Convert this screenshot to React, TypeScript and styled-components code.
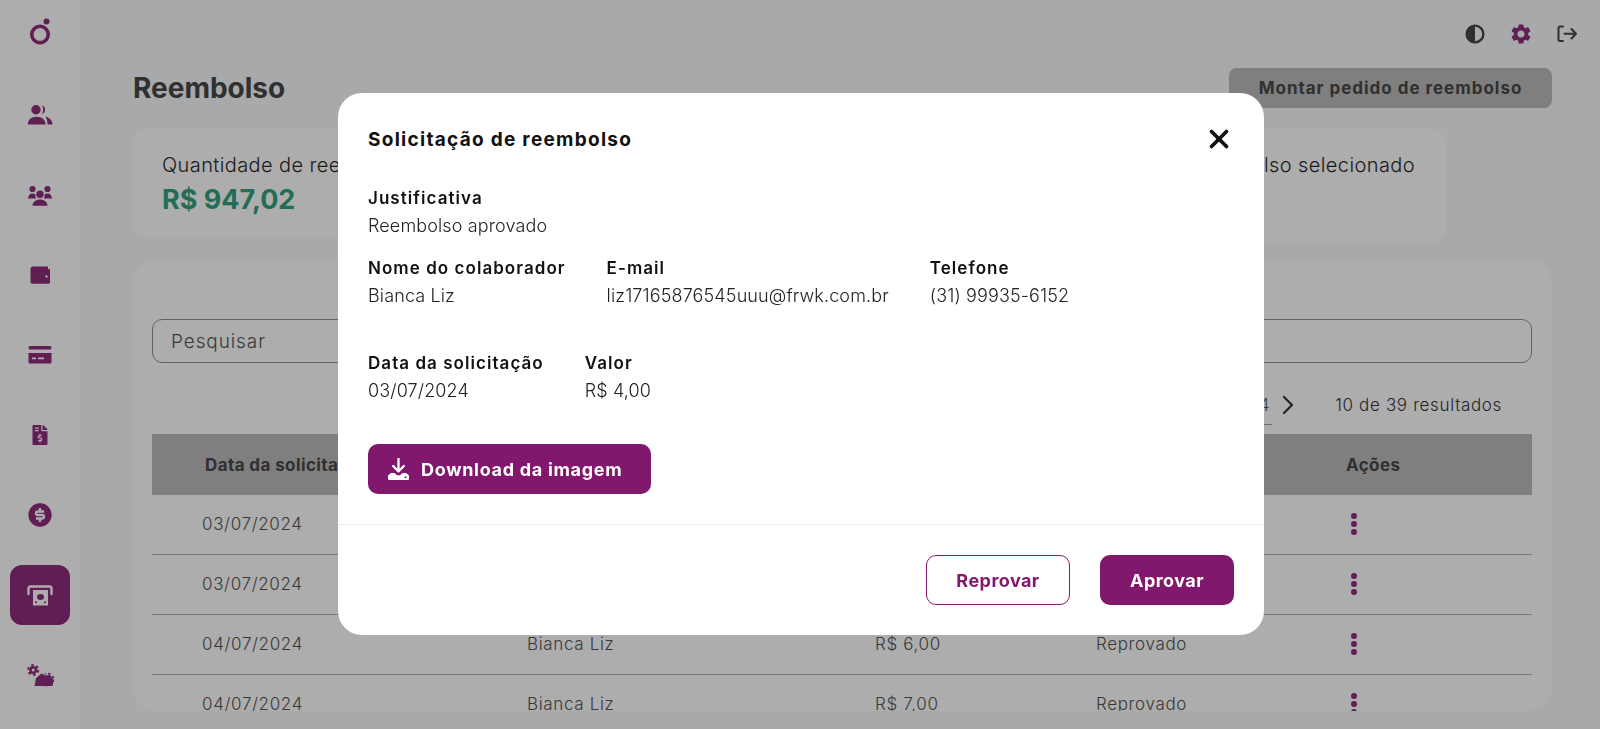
import React from 'react'
import styled, { createGlobalStyle } from 'styled-components'
import { X, ChevronRight } from 'lucide-react'
import { FaFileInvoiceDollar } from 'react-icons/fa'
import { MdSettings } from 'react-icons/md'
import { RiMoneyDollarCircleFill } from 'react-icons/ri'

const GlobalStyle = createGlobalStyle`
  html, body {
    margin: 0;
    height: 100%;
    overflow: hidden;
    background: #f7f8fc;
    font-family: Inter, "Liberation Sans", sans-serif;
  }
  * { box-sizing: border-box; }
`

const purple = '#82186e'

const Shell = styled.div`
  display: flex;
  width: 1600px;
  height: 729px;
  overflow: hidden;
`

const Sidebar = styled.nav`
  width: 80px;
  flex: none;
  background: #fff;
  display: flex;
  flex-direction: column;
  align-items: center;
  padding-top: 17px;
`

const Logo = styled.svg`
  width: 22px;
  height: 28px;
  margin-bottom: 40px;
`

const NavItem = styled.div<{ $active?: boolean }>`
  width: 60px;
  height: 60px;
  flex: none;
  margin-bottom: 20px;
  border-radius: 12px;
  display: flex;
  align-items: center;
  justify-content: center;
  color: ${p => (p.$active ? '#fff' : purple)};
  background: ${p => (p.$active ? purple : 'transparent')};
`

const Main = styled.main`
  flex: 1;
  min-width: 0;
  display: flex;
  flex-direction: column;
  padding: 0 48px 18px 52px;
`

const TopBar = styled.div`
  height: 68px;
  flex: none;
  margin-right: -25px;
  display: flex;
  align-items: center;
  justify-content: flex-end;
  gap: 24px;
  color: #343434;
`

const TitleRow = styled.div`
  height: 40px;
  flex: none;
  display: flex;
  align-items: center;
  justify-content: space-between;
`

const Title = styled.h1`
  margin: 0 0 0 1px;
  font-size: 28px;
  font-weight: 700;
  color: #343434;
`

const GreyButton = styled.button`
  width: 323px;
  height: 40px;
  border: 0;
  border-radius: 8px;
  background: #b4b4b4;
  color: #343434;
  font-family: Inter, sans-serif;
  font-size: 17px;
  font-weight: 700;
  letter-spacing: 0.98px;
`

const Summary = styled.section`
  width: 1314px;
  height: 115px;
  flex: none;
  margin-top: 20px;
  display: flex;
  align-items: flex-start;
  gap: 16px;
`

const SummaryCard = styled.div<{ $h: number; $grow?: boolean; $end?: boolean }>`
  height: ${p => p.$h}px;
  flex: ${p => (p.$grow ? 1 : 'none')};
  width: ${p => (p.$grow ? 'auto' : '500px')};
  padding: 25px 31px 0 30px;
  border-radius: 16px;
  background: #fff;
  display: flex;
  flex-direction: column;
  align-items: ${p => (p.$end ? 'flex-end' : 'flex-start')};
`

const SummaryLabel = styled.div`
  font-size: 20px;
  font-weight: 300;
  line-height: 24px;
  letter-spacing: 0.4px;
  color: #111;
`

const SummaryValue = styled.div`
  margin-top: 8px;
  font-size: 27px;
  font-weight: 700;
  line-height: 30px;
  color: #1c9972;
`

const TableCard = styled.section`
  flex: 1;
  min-height: 0;
  margin-top: 16px;
  padding: 60px 20px 0;
  border-radius: 24px;
  background: #fff;
  overflow: hidden;
`

const Search = styled.div`
  height: 44px;
  padding-left: 18px;
  border: 1px solid #888;
  border-radius: 10px;
  display: flex;
  align-items: center;
  font-size: 19px;
  font-weight: 300;
  letter-spacing: 0.9px;
  color: #444;
`

const Pager = styled.div`
  height: 71px;
  padding: 12px 30px 0 0;
  display: flex;
  align-items: center;
  justify-content: flex-end;
  font-size: 17px;
  font-weight: 300;
  letter-spacing: 0.65px;
  color: #222;
`

const Results = styled.span`
  margin-left: 31px;
`

const PageNum = styled.span`
  line-height: 20px;
  padding: 0 2px 9px 0;
  margin-top: 10px;
  border-bottom: 1px solid #999;
  color: #444;
`

const Table = styled.div`
  display: flex;
  flex-direction: column;
`

const columns = '326px 347px 221px 250px 1fr'

const HeadRow = styled.div`
  height: 61px;
  flex: none;
  display: grid;
  grid-template-columns: ${columns};
  align-items: center;
  background: #b4b4b4;
  font-size: 17px;
  font-weight: 700;
  letter-spacing: 0.4px;
  color: #343434;
`

const HeadCell = styled.div<{ $pad: number }>`
  padding-left: ${p => p.$pad}px;
`

const Row = styled.div`
  height: 60px;
  flex: none;
  padding-bottom: 1px;
  display: grid;
  grid-template-columns: ${columns};
  align-items: center;
  border-bottom: 1px solid #aaa;
  font-size: 17px;
  font-weight: 300;
  letter-spacing: 0.65px;
  color: #444;
`

const Cell = styled.div<{ $pad?: number }>`
  padding-left: ${p => p.$pad ?? 50}px;
`

const Dots = styled.div`
  padding-left: 55px;
  display: flex;
  flex-direction: column;
  gap: 2px;
`

const Dot = styled.span`
  width: 6px;
  height: 6px;
  border-radius: 50%;
  background: ${purple};
`

const Overlay = styled.div`
  position: fixed;
  inset: 0;
  background: rgba(41, 41, 41, 0.384);
  display: flex;
  align-items: center;
  justify-content: center;
`

const Modal = styled.div`
  width: 926px;
  height: 542px;
  margin: 0 0 1px 2px;
  border-radius: 24px;
  background: #fff;
  display: flex;
  flex-direction: column;
`

const ModalHead = styled.div`
  height: 92px;
  flex: none;
  padding: 0 30px;
  display: flex;
  align-items: center;
  justify-content: space-between;
`

const ModalTitle = styled.h2`
  margin: 0;
  font-size: 19px;
  font-weight: 700;
  letter-spacing: 1.28px;
  color: #111;
`

const ModalBody = styled.div`
  flex: 1;
  padding: 1px 30px 0;
`

const FieldRow = styled.div<{ $height: number }>`
  display: flex;
  gap: 41px;
  height: ${p => p.$height}px;
`

const Label = styled.div`
  height: 28px;
  font-size: 17px;
  font-weight: 600;
  line-height: 24px;
  letter-spacing: 1.05px;
  color: #111;
`

const Value = styled.div`
  font-size: 18px;
  font-weight: 300;
  line-height: 24px;
  letter-spacing: 0.13px;
  color: #222;
`

const PrimaryButton = styled.button<{ $w: number }>`
  width: ${p => p.$w}px;
  height: 50px;
  border: 0;
  border-radius: 10px;
  background: ${purple};
  color: #fff;
  font-family: Inter, sans-serif;
  font-size: 18px;
  font-weight: 700;
  letter-spacing: 0.45px;
  display: flex;
  align-items: center;
  justify-content: center;
  gap: 11px;
`

const OutlineButton = styled(PrimaryButton)`
  background: #fff;
  border: 1px solid ${purple};
  color: ${purple};
`

const DownloadButton = styled(PrimaryButton)`
  justify-content: flex-start;
  padding-left: 20px;
  letter-spacing: 0.7px;
`

const ModalFoot = styled.div`
  height: 111px;
  flex: none;
  padding-right: 30px;
  border-top: 1px solid #eee;
  display: flex;
  align-items: center;
  justify-content: flex-end;
  gap: 30px;
`

const CloseBtn = styled.button`
  border: 0;
  padding: 0;
  background: none;
  color: #111;
  display: flex;
`

const TwoPeopleIcon = () => (
  <svg width="26" height="20" viewBox="0 0 26 20" fill="currentColor">
    <circle cx="9" cy="4.7" r="4.7" />
    <path d="M15 .6A4.4 4.4 0 0 1 15 9C16.6 6.4 16.6 3.2 15 .6Z" />
    <path d="M.8 19.6C.8 14.5 4.8 11.8 9.5 11.8C14.2 11.8 18.6 14.5 18.6 19.6Z" />
    <path d="M18.5 11.8C22.5 12.4 25.5 15.5 25.5 19.6H20.5C20.5 16.5 19.8 14 18.5 11.8Z" />
  </svg>
)

const GroupIcon = () => (
  <svg width="26" height="21" viewBox="0 0 26 21" fill="currentColor">
    <circle cx="5.5" cy="4" r="3.1" />
    <circle cx="20.5" cy="4" r="3.1" />
    <circle cx="13" cy="9.3" r="3.7" />
    <path d="M1 13.5C1 10.5 3 8.5 5.5 8.5C6.8 8.5 7.8 8.9 8.5 9.5C8.3 11 8.5 12.3 9 13.5Z" />
    <path d="M25 13.5C25 10.5 23 8.5 20.5 8.5C19.2 8.5 18.2 8.9 17.5 9.5C17.7 11 17.5 12.3 17 13.5Z" />
    <path d="M5.5 20.8C5.5 16.8 9 14.5 13 14.5C17 14.5 20.5 16.8 20.5 20.8Z" />
  </svg>
)

const WalletIcon = () => (
  <svg width="20" height="18" viewBox="0 0 20 18" fill="currentColor">
    <path fillRule="evenodd" clipRule="evenodd" d="M.5 3C.5 1.5 1.5.5 3 .5H18V3H19C19.6 3 20 3.5 20 4V16C20 17 19.3 17.8 18.3 17.8H2.5C1.3 17.8.5 17 .5 15.8ZM16.5 9.3A1.2 1.2 0 1 0 16.5 11.7A1.2 1.2 0 1 0 16.5 9.3Z" />
  </svg>
)

const CardIcon = () => (
  <svg width="24" height="18" viewBox="0 0 24 18" fill="currentColor">
    <rect x=".5" y="0" width="23" height="3.6" rx="1.5" />
    <path fillRule="evenodd" clipRule="evenodd" d="M.5 7H23.5V16C23.5 17 23 17.5 22 17.5H2C1 17.5.5 17 .5 16ZM4 11.5V13.2H8V11.5ZM10 11.5V13.2H16V11.5Z" />
  </svg>
)

const AtmIcon = () => (
  <svg width="28" height="21" viewBox="0 0 28 21" fill="none">
    <path d="M2.5 9V3.5Q2.5 1.5 4.5 1.5H23.5Q25.5 1.5 25.5 3.5V9" stroke="currentColor" strokeWidth="2.4" strokeLinecap="round" />
    <path fillRule="evenodd" clipRule="evenodd" d="M7 5H22V20.5H7ZM14.5 9A3.5 3 0 1 0 14.5 15A3.5 3 0 1 0 14.5 9ZM10 16.2A1 1 0 1 0 10 18.2A1 1 0 1 0 10 16.2ZM19 16.2A1 1 0 1 0 19 18.2A1 1 0 1 0 19 16.2Z" fill="currentColor" />
  </svg>
)

const CogsIcon = () => (
  <svg width="27" height="24" viewBox="0 0 27 24" fill="currentColor">
    <circle cx="6.2" cy="7" r="4" />
    <circle cx="6.2" cy="7" r="5" fill="none" stroke="currentColor" strokeWidth="2" strokeDasharray="2.5 2.73" />
    <circle cx="6.2" cy="7" r="1.5" fill="#fff" />
    <path d="M7.5 23L9 15L14.5 10.5L18 12.5L23 12L26.5 17L25.5 23Z" />
    <circle cx="20.5" cy="16.5" r="6" fill="none" stroke="currentColor" strokeWidth="1.8" strokeDasharray="2.4 2.31" />
    <circle cx="10.2" cy="13" r="1.1" fill="#fff" />
    <circle cx="17.5" cy="11" r="1" fill="#fff" />
  </svg>
)

const ContrastIcon = () => (
  <svg width="20" height="20" viewBox="0 0 20 20" fill="none">
    <circle cx="10" cy="10" r="8.4" stroke="currentColor" strokeWidth="2.4" />
    <path d="M10 1.5A8.5 8.5 0 0 0 10 18.5Z" fill="currentColor" />
  </svg>
)

const LogoutIcon = () => (
  <svg width="20" height="18" viewBox="0 0 20 18" fill="none" stroke="currentColor" strokeWidth="2" strokeLinecap="round" strokeLinejoin="round">
    <path d="M6 1.5H3Q1.5 1.5 1.5 3V14.5Q1.5 16 3 16H6" />
    <path d="M7.5 8.7H19M14.5 4L19 8.7L14.5 13.5" />
  </svg>
)

const DownloadIcon = () => (
  <svg width="22" height="22" viewBox="0 0 22 22" fill="none">
    <path d="M10.5 1V13M5.2 8L10.5 13.5L15.8 8" stroke="currentColor" strokeWidth="2.3" strokeLinecap="round" strokeLinejoin="round" />
    <path fillRule="evenodd" clipRule="evenodd" d="M3 15H6.5L9 17.3H12L14.5 15H18L21 17.5V20.5C21 21.5 20.5 22 19.5 22H1.5C.5 22 0 21.5 0 20.5V17.5ZM17.5 18.2A1 1 0 1 0 17.5 20.2A1 1 0 1 0 17.5 18.2Z" fill="currentColor" />
  </svg>
)

const rows = [
  { date: '03/07/2024', name: 'Bianca Liz', value: 'R$ 4,00', status: 'Aprovado' },
  { date: '03/07/2024', name: 'Bianca Liz', value: 'R$ 5,00', status: 'Aprovado' },
  { date: '04/07/2024', name: 'Bianca Liz', value: 'R$ 6,00', status: 'Reprovado' },
  { date: '04/07/2024', name: 'Bianca Liz', value: 'R$ 7,00', status: 'Reprovado' },
]

const App: React.FC = () => (
  <>
    <GlobalStyle />
    <Shell>
      <Sidebar>
        <Logo viewBox="0 0 22 28" fill="none">
          <circle cx="11" cy="17.5" r="8.25" stroke={purple} strokeWidth="3.5" />
          <circle cx="17.5" cy="4.5" r="3" fill={purple} />
        </Logo>
        <NavItem><TwoPeopleIcon /></NavItem>
        <NavItem><GroupIcon /></NavItem>
        <NavItem><WalletIcon /></NavItem>
        <NavItem><CardIcon /></NavItem>
        <NavItem><FaFileInvoiceDollar size={20} /></NavItem>
        <NavItem><RiMoneyDollarCircleFill size={28} /></NavItem>
        <NavItem $active><AtmIcon /></NavItem>
        <NavItem><CogsIcon /></NavItem>
      </Sidebar>
      <Main>
        <TopBar>
          <ContrastIcon />
          <MdSettings size={24} color={purple} />
          <LogoutIcon />
        </TopBar>
        <TitleRow>
          <Title>Reembolso</Title>
          <GreyButton>Montar pedido de reembolso</GreyButton>
        </TitleRow>
        <Summary>
          <SummaryCard $h={110}>
            <SummaryLabel>Quantidade de reembolso</SummaryLabel>
            <SummaryValue>R$ 947,02</SummaryValue>
          </SummaryCard>
          <SummaryCard $h={115} $grow $end>
            <SummaryLabel>Valor de reembolso selecionado</SummaryLabel>
          </SummaryCard>
        </Summary>
        <TableCard>
          <Search>Pesquisar</Search>
          <Pager>
            <PageNum>4</PageNum>
            <ChevronRight size={32} strokeWidth={1.7} />
            <Results>10 de 39 resultados</Results>
          </Pager>
          <Table>
            <HeadRow>
              <HeadCell $pad={53}>Data da solicitação</HeadCell>
              <HeadCell $pad={50}>Nome</HeadCell>
              <HeadCell $pad={50}>Valor</HeadCell>
              <HeadCell $pad={50}>Status</HeadCell>
              <HeadCell $pad={50}>Ações</HeadCell>
            </HeadRow>
            {rows.map(r => (
              <Row key={r.value}>
                <Cell>{r.date}</Cell>
                <Cell $pad={49}>{r.name}</Cell>
                <Cell>{r.value}</Cell>
                <Cell>{r.status}</Cell>
                <Dots><Dot /><Dot /><Dot /></Dots>
              </Row>
            ))}
          </Table>
        </TableCard>
      </Main>
    </Shell>
    <Overlay>
      <Modal>
        <ModalHead>
          <ModalTitle>Solicitação de reembolso</ModalTitle>
          <CloseBtn><X size={30} strokeWidth={3} /></CloseBtn>
        </ModalHead>
        <ModalBody>
          <FieldRow $height={70}>
            <div><Label>Justificativa</Label><Value>Reembolso aprovado</Value></div>
          </FieldRow>
          <FieldRow $height={95}>
            <div><Label>Nome do colaborador</Label><Value>Bianca Liz</Value></div>
            <div><Label>E-mail</Label><Value>liz17165876545uuu@frwk.com.br</Value></div>
            <div><Label>Telefone</Label><Value>(31) 99935-6152</Value></div>
          </FieldRow>
          <FieldRow $height={93}>
            <div><Label>Data da solicitação</Label><Value>03/07/2024</Value></div>
            <div><Label>Valor</Label><Value>R$ 4,00</Value></div>
          </FieldRow>
          <DownloadButton $w={283}><DownloadIcon />Download da imagem</DownloadButton>
        </ModalBody>
        <ModalFoot>
          <OutlineButton $w={144}>Reprovar</OutlineButton>
          <PrimaryButton $w={134}>Aprovar</PrimaryButton>
        </ModalFoot>
      </Modal>
    </Overlay>
  </>
)

export default App
